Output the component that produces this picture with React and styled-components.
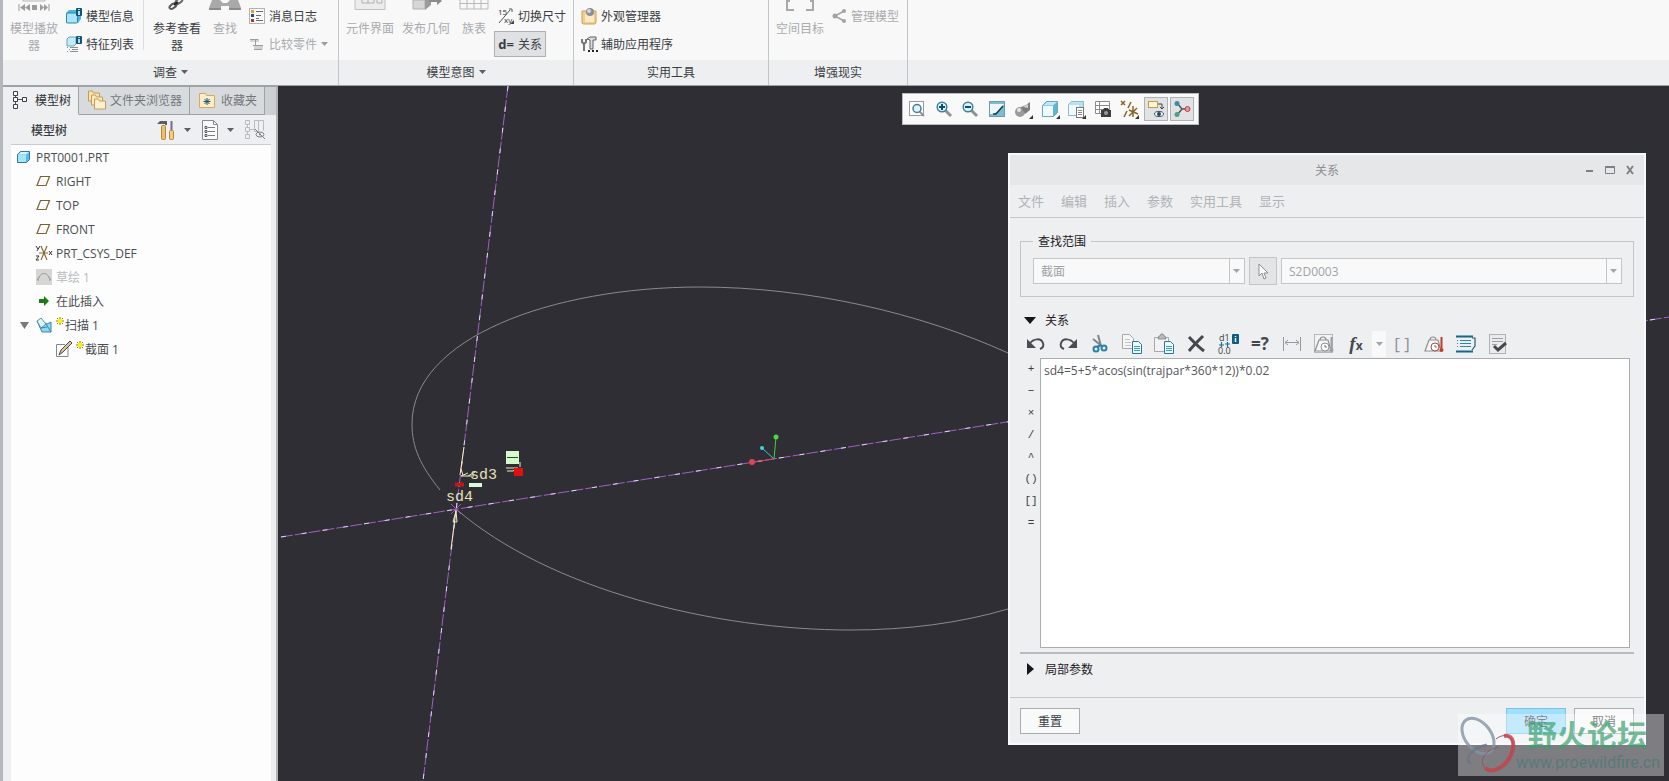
import React from "react";
import styled, { createGlobalStyle, css } from "styled-components";

const GlobalStyle = createGlobalStyle`
  * {
    box-sizing: border-box;
  }

  body {
    margin: 0;
    overflow: hidden;
  }

  body, button, input, select, textarea {
    font-family: "Open Sans", "Noto Sans CJK SC", sans-serif;
    font-size: 12px;
    color: #3a3d42;
  }

  button {
    margin: 0;
    padding: 0;
    border: none;
    background: none;
  }
`;

/* ---------- icons ---------- */

const Svg = styled.svg`
  display: block;
  flex: none;
  overflow: visible;
`;

function Icon({ w = 16, h = 16, children }) {
  return (
    <Svg width={w} height={h} viewBox={`0 0 ${w} ${h}`} fill="none" aria-hidden="true">
      {children}
    </Svg>
  );
}

const Caret = ({ color = "#5c6066" }) => (
  <Icon w={7} h={4}>
    <path d="M0 0h7L3.5 4z" fill={color} />
  </Icon>
);

const InfoBadge = ({ x, y }) => (
  <g>
    <rect x={x} y={y} width="6" height="8" rx="1" fill="#0e5675" />
    <path d={`M${x + 3} ${y + 1}v1M${x + 3} ${y + 3}v4`} stroke="#fff" strokeWidth="1.5" />
  </g>
);

const PlayerIcon = () => (
  <Icon w={32} h={20}>
    <path d="M5 0v1h22V0" stroke="#b5b5b5" />
    <path d="M1 4v7" stroke="#9b9b9b" />
    <path d="M7 4v7L2 7.5zM12 4v7L7 7.5zM14 5h5v5h-5zM22 4v7l4-3.500zM26 4v7l4-3.500z" fill="#9b9b9b" />
    <path d="M31 4v7" stroke="#9b9b9b" />
  </Icon>
);

const CubeInfoIcon = () => (
  <Icon>
    <path d="M0 5l3-3h12v9l-3 4H1l-1-1z" fill="#4db4dc" />
    <rect x="0.5" y="5" width="11" height="10" rx="1" fill="#a9e4f8" stroke="#2e86ab" />
    <InfoBadge x={10} y={0} />
  </Icon>
);

const ListInfoIcon = () => (
  <Icon>
    <path d="M1 3l2-2h7v7l-2 2H1z" fill="#c3ebf8" stroke="#6fa5b8" />
    <InfoBadge x={10} y={0} />
    <path d="M1 11.5h1M4 11.5h8M3 13.5h1M6 13.5h6M1 15.5h1M4 15.5h8" stroke="#8c9094" />
  </Icon>
);

const LinkIcon = () => (
  <Icon w={32} h={20}>
    <ellipse cx="18" cy="1" rx="4" ry="2" transform="rotate(-35 18 1)" stroke="#6a6a6a" strokeWidth="2" />
    <ellipse cx="12" cy="6" rx="4" ry="2" transform="rotate(-35 12 6)" stroke="#5a5a5a" strokeWidth="2" />
    <path d="M13 5l4-3" stroke="#222" strokeWidth="2" />
  </Icon>
);

const BinocularsIcon = () => (
  <Icon w={32} h={20}>
    <path d="M3 0h8l3 3h4l3-3h8l3 8v2H20V6h-8v4H0V8z" fill="#a9a9a9" />
    <path d="M0 8h12v2H0zM20 8h12v2H20z" fill="#8b8b8b" />
  </Icon>
);

const LogIcon = () => (
  <Icon>
    <rect x="0.5" y="0.5" width="15" height="15" fill="#fbfbfb" stroke="#b3b3b3" />
    <rect x="2" y="2" width="3" height="3" fill="#e59a3c" />
    <rect x="2" y="6" width="3" height="3" fill="#2b4a78" />
    <rect x="2" y="11" width="3" height="3" fill="#a04030" />
    <path d="M7 3.5h7M7 7.5h5M7 12.5h7M7 10.5h3" stroke="#6a6a6a" />
  </Icon>
);

const CompareIcon = () => (
  <Icon>
    <path d="M1 3h9v3H7v3h7v4H5v-3h1V6H1z" fill="#d3d3d3" />
    <path d="M1 3.5h8M6.5 4v6M4 9.5h10M5 13.5h8" stroke="#9c9c9c" />
  </Icon>
);

const InterfaceIcon = () => (
  <Icon w={32} h={20}>
    <path d="M1 0v9.5h30V0" fill="#ececec" stroke="#c0c0c0" />
    <path d="M8 0v3h12V0M14 0v3M23 0v3h5V0" stroke="#b0b0b0" />
  </Icon>
);

const PublishIcon = () => (
  <Icon w={32} h={20}>
    <path d="M3 0h12v9H3z" fill="#d6d6d6" stroke="#b0b0b0" />
    <path d="M15 0l6-1v6l-6 5z" fill="#9b9b9b" />
    <path d="M19 0h8v-3l5 4-5 4V2h-8z" fill="#8d8d8d" />
  </Icon>
);

const TableIcon = () => (
  <Icon w={32} h={20}>
    <path d="M2 0v9h28V0M9 0v9M16 0v9M23 0v9M2 3.5h28" stroke="#b9b9b9" />
  </Icon>
);

const SwitchDimIcon = () => (
  <Icon>
    <text x="0" y="7" fontSize="8" fill="#333">15</text>
    <text x="6" y="15" fontSize="8" fill="#333">xy</text>
    <path d="M1 15L12 2M11 1h3v3" stroke="#555" />
    <path d="M16 12v4h-4z" fill="#444" />
  </Icon>
);

const AppearanceIcon = () => (
  <Icon>
    <path d="M1 3h14v11l-1 2H2l-1-1z" fill="#f0cf8b" stroke="#cf9f55" />
    <path d="M4 6h9v8H4z" fill="#faeacb" />
    <circle cx="9" cy="4" r="4" fill="#8b8f94" />
    <circle cx="8" cy="3" r="2" fill="#d5d9dc" />
  </Icon>
);

const ToolsIcon = () => (
  <Icon>
    <path d="M1 3v3l2 2v7M5 3v3L3 8" stroke="#777" strokeWidth="2" />
    <path d="M6 3l3-2h6v3h-3v9H9V4z" fill="#dedede" stroke="#5f5f5f" />
    <path d="M7 15h2M11 15h2M15 15h2" stroke="#222" strokeWidth="2" />
  </Icon>
);

const TargetIcon = () => (
  <Icon w={32} h={20}>
    <path d="M3 1v9h7M29 1v9h-7M2 1h4M30 1h-4" stroke="#a8a8a8" strokeWidth="2" />
  </Icon>
);

const ShareIcon = () => (
  <Icon w={15}>
    <path d="M12 3L3 8l9 5" stroke="#a3a3a3" strokeWidth="1.5" />
    <circle cx="12" cy="3" r="2" fill="#a3a3a3" />
    <circle cx="3" cy="8" r="2.5" fill="#a3a3a3" />
    <circle cx="12" cy="13" r="2" fill="#a3a3a3" />
  </Icon>
);

const TreeTabIcon = () => (
  <Icon w={14} h={20}>
    <path d="M2.5 5v2M2.5 12v3M5 9.5h4" stroke="#555" />
    <path d="M0.5 1.5h4v4h-4zM0.5 7.5h4v4h-4zM0.5 14.5h4v4h-4zM9.5 7.5h4v4h-4z" fill="#fff" stroke="#3c3f44" />
  </Icon>
);

const FoldersIcon = () => (
  <Icon w={18} h={20}>
    <path d="M0.5 1h4l1 2h6v8h-11z" fill="#f8e2b0" stroke="#c49c55" />
    <path d="M3.5 5h4l1 2h6v8h-11z" fill="#fbe9c0" stroke="#c49c55" />
    <path d="M6.5 9h4l1 2h6v8h-11z" fill="#fdf0d0" stroke="#c49c55" />
  </Icon>
);

const FavIcon = () => (
  <Icon>
    <path d="M0.5 1.5h6l1 2h8v12h-15z" fill="#fdedc6" stroke="#d5aa5c" />
    <path d="M8 6v7M4.5 9.5h7M5.5 7l5 5M10.5 7l-5 5" stroke="#0f5876" />
  </Icon>
);

const HammerIcon = () => (
  <Icon w={18} h={20}>
    <path d="M0 4l3-3h7v4H8V4H4z" fill="#5b5d61" />
    <rect x="4.5" y="5.5" width="4" height="14" rx="1" fill="#eebf6b" stroke="#b9853b" />
    <path d="M14.5 1v9" stroke="#7d6a8a" strokeWidth="2" />
    <rect x="12.5" y="10.5" width="4" height="9" rx="1" fill="#f3cf86" stroke="#b9853b" />
  </Icon>
);

const DocListIcon = () => (
  <Icon w={16} h={20}>
    <path d="M0.5 0.5h11l4 4v15h-15z" fill="#fbfbfb" stroke="#84898d" />
    <path d="M11.5 0.5v4h4" stroke="#84898d" />
    <path d="M6 7.5h7M6 11.5h7M6 15.5h7" stroke="#7c8084" />
    <path d="M3 6.5h2v2H3zM3 10.5h2v2H3zM3 14.5h2v2H3z" stroke="#54585c" />
  </Icon>
);

const TreeFilterIcon = () => (
  <Icon w={20} h={20}>
    <path
      d="M0.5 0.5h4v4h-4zM0.5 7.5h4v4h-4zM0.5 14.5h4v4h-4zM2.5 5v2M2.5 12v2M5 9.5h4M9.5 0.5h4v11h-4zM13.5 0.5h5v10"
      stroke="#b9bcbf"
    />
    <ellipse cx="15" cy="14.5" rx="4" ry="2.5" stroke="#7d8286" />
    <circle cx="15" cy="14.5" r="1" fill="#7d8286" />
    <path d="M10 9l10 10" stroke="#7d8286" />
  </Icon>
);

const PartIcon = () => (
  <Icon w={13} h={12}>
    <path d="M0.5 3.5l3-3h9v8l-3 3h-9z" fill="#56bde6" stroke="#33798f" />
    <path d="M1 4h8v7H1z" fill="#a5e5fb" />
    <path d="M1 3.5L4 1h8L9 3.5z" fill="#d8f5fd" />
  </Icon>
);

const PlaneIcon = () => (
  <Icon w={15} h={10}>
    <path d="M4.5 0.5h9l-3.5 9H1z" stroke="#7d6030" strokeWidth="1.2" />
  </Icon>
);

const CsysIcon = () => (
  <Icon>
    <path d="M5 1l6 14M11 1L5 15M3 8h9" stroke="#8a6c34" strokeWidth="1.2" />
    <path d="M0 1l2 3M4 1L1 6M0 11h3l-3 4h3M13 6l3 4M16 6l-3 4" stroke="#333" />
  </Icon>
);

const SketchIcon = () => (
  <Icon>
    <rect width="16" height="16" fill="#d6d6d4" />
    <path d="M2 12c1-10 11-10 12 0M4 7l-3 4M12 7l3 4" stroke="#9c9c9a" />
  </Icon>
);

const ArrowIcon = () => (
  <Icon w={10} h={10}>
    <path d="M0 3h5V0l5 5-5 5V7H0z" fill="#1c7c12" />
  </Icon>
);

const SweepIcon = () => (
  <Icon>
    <path d="M5 4l6 3 4-2v10H6L1 4z" fill="#8fd8f2" stroke="#3a87a6" />
    <path d="M1 4l4-3 5 6-5 4z" fill="#dff4fb" stroke="#5b93aa" />
    <path d="M10 7l5 8M5 11l6-1" stroke="#3a87a6" />
  </Icon>
);

const SectionIcon = () => (
  <Icon>
    <path d="M12 5v10.5H0.5V3.5H9" stroke="#85898d" />
    <path d="M3 14l2-5 9-9 2 2-9 9z" fill="#d9c3a0" stroke="#4b4b4b" />
  </Icon>
);

const SparkIcon = () => (
  <Icon w={8} h={8}>
    <path d="M4 0v8M0 4h8M1 1l6 6M7 1L1 7" stroke="#8c8200" />
    <rect x="2" y="2" width="4" height="4" fill="#fff200" />
  </Icon>
);

const Magnifier = ({ sign }) => (
  <Icon>
    <path d="M9 9l6 6" stroke="#8e9296" strokeWidth="3" />
    <circle cx="6" cy="6" r="4.8" fill="#e2f3f9" stroke="#3d809b" strokeWidth="1.5" />
    <path d={sign} stroke="#0c5070" strokeWidth="2" />
  </Icon>
);

const ZoomFitIcon = () => (
  <Icon>
    <rect x="0.5" y="0.5" width="14" height="14" fill="#fff" stroke="#999" />
    <path d="M10 10l5 5" stroke="#8e9296" strokeWidth="2" />
    <circle cx="8" cy="7.5" r="4" fill="#e2f3f9" stroke="#3d809b" strokeWidth="1.5" />
  </Icon>
);

const ZoomInIcon = () => <Magnifier sign="M3 6h6M6 3v6" />;

const ZoomOutIcon = () => <Magnifier sign="M3 6h6" />;

const RepaintIcon = () => (
  <Icon>
    <rect x="0.5" y="0.5" width="15" height="15" fill="#7fbdd2" stroke="#6a9cad" />
    <path d="M1 3h14C13 7 9 11 4 13H1z" fill="#eef8fb" />
    <path d="M4 13h3l7-8" stroke="#143c50" strokeWidth="1.5" />
  </Icon>
);

const Corner = () => <path d="M18 14v4h-4z" fill="#333" />;

const RenderStyleIcon = () => (
  <Icon>
    <circle cx="5" cy="11" r="5" fill="#9a9a9a" />
    <circle cx="4" cy="9" r="2" fill="#e4e4e4" />
    <path d="M6 6l5-2 4-3v8l-5 4z" fill="#7d7d7d" />
    <path d="M8 6l5-3v4z" fill="#cfcfcf" />
    <Corner />
  </Icon>
);

const BoxIcon = () => (
  <Icon>
    <path d="M0.5 4.5l4-4h11v11l-4 4h-11z" fill="#62b4cf" stroke="#64a9c0" />
    <path d="M1 5h10v10H1z" fill="#eefaff" />
    <path d="M1 4.5L5 1h10l-4 3.5z" fill="#bfe8f6" />
    <Corner />
  </Icon>
);

const NamedViewIcon = () => (
  <Icon>
    <path d="M0.5 3.5l3-3h12v10l-3 4h-12z" fill="#b7e2f1" stroke="#8bbccb" />
    <path d="M1 4h10v10H1z" fill="#f2fbff" />
    <rect x="8.5" y="6.5" width="7" height="10" fill="#fff" stroke="#777" />
    <path d="M10 9.5h4M10 11.5h4M10 13.5h4" stroke="#888" />
    <Corner />
  </Icon>
);

const ViewManagerIcon = () => (
  <Icon>
    <path d="M0.5 0.5h14v12h-14zM0.5 4.5h14M4.5 0.5v12M0.5 8.5h14" fill="#fff" stroke="#8b8b8b" />
    <path d="M6 9h2l1-2h4l1 2h2v7H6z" fill="#3d3d3d" />
    <circle cx="11" cy="12" r="2" fill="#9a9a9a" />
  </Icon>
);

const DatumIcon = () => (
  <Icon>
    <path d="M0 0l4 4M4 0L0 4M3 16l3-6M7 7l3-6M12 5v11M8 9l9 4M16 7l-8 8" stroke="#8a6526" strokeWidth="1.5" />
    <Corner />
  </Icon>
);

const AnnotationIcon = () => (
  <Icon>
    <rect x="0.5" y="0.5" width="9" height="6" fill="#fff6d8" stroke="#c59b46" />
    <path d="M10 3h4v5M12 6l2 2 2-2" stroke="#444" />
    <ellipse cx="11" cy="13" rx="4.5" ry="2.5" fill="#fff" stroke="#35566a" />
    <circle cx="11" cy="13" r="2" fill="#25485c" />
  </Icon>
);

const SpinIcon = () => (
  <Icon>
    <path d="M3 2l5 6-5 6M8 8h6" stroke="#555" strokeWidth="1.5" />
    <circle cx="3" cy="2.5" r="2.5" fill="#3e88a8" />
    <circle cx="3" cy="13.5" r="2.5" fill="#4fa08a" />
    <circle cx="13.5" cy="8" r="2.5" fill="#e29a9a" stroke="#b54444" />
  </Icon>
);

const UndoIcon = ({ flip }) => (
  <Icon w={20} h={14}>
    <g transform={flip ? "matrix(-1 0 0 1 20 0)" : undefined}>
      <path d="M3 7C8 1 15 1 17 6c1 3 0 5-3 6" stroke="#4a4d50" strokeWidth="2" />
      <path d="M1 2v9h9z" fill="#4a4d50" />
    </g>
  </Icon>
);

const ScissorsIcon = () => (
  <Icon w={16} h={18}>
    <path d="M6 0l3 11M1 4l10 8" stroke="#808589" strokeWidth="2" />
    <circle cx="4" cy="14" r="2.5" stroke="#2a80a6" strokeWidth="2" />
    <circle cx="12" cy="13" r="2.5" stroke="#2a80a6" strokeWidth="2" />
    <path d="M5 12l4-2" stroke="#2a80a6" strokeWidth="2" />
  </Icon>
);

const BluePage = () => (
  <g>
    <path d="M10.5 7.5h6l3 3v9h-9z" fill="#eef9fd" stroke="#28779a" />
    <path d="M12 12.5h6M12 14.5h6M12 16.5h6" stroke="#3d9cc4" />
  </g>
);

const CopyIcon = () => (
  <Icon w={20} h={20}>
    <path d="M0.5 0.5h7l4 4v10h-11z" fill="#f6f6f6" stroke="#a6a9ab" />
    <path d="M3 5.5h5M3 8.5h6M3 11.5h6" stroke="#c3c5c7" />
    <BluePage />
  </Icon>
);

const PasteIcon = () => (
  <Icon w={20} h={20}>
    <path d="M0.5 3.5h14v14h-14z" fill="#f3f3f3" stroke="#a6a9ab" />
    <path d="M4 5l1-3h1l1-2h2l1 2h1l1 3z" fill="#b9bbbd" stroke="#8d9093" />
    <BluePage />
  </Icon>
);

const DeleteIcon = () => (
  <Icon w={18} h={18}>
    <path d="M2 2c4 4 8 9 15 14M16 1C11 6 6 11 2 16" stroke="#45484b" strokeWidth="3" />
  </Icon>
);

const DimInfoIcon = () => (
  <Icon w={20} h={20}>
    <text x="1" y="7" fontSize="9" fill="#3a3d40">d1</text>
    <path d="M3.5 8v5M1 11h5M9.5 8v5M7 10h5" stroke="#1d6d90" strokeWidth="1.2" />
    <text x="0" y="20" fontSize="9" fill="#3a3d40">0.0</text>
    <rect x="14" y="0" width="7" height="10" rx="1" fill="#0f5d80" />
    <path d="M17.5 2v1M17.5 4v4" stroke="#fff" strokeWidth="1.5" />
  </Icon>
);

const DistanceIcon = () => (
  <Icon w={20} h={16}>
    <path d="M1.5 1v14M18.5 1v14M3 6.5h14M6 4L3 6.5 6 9M14 4l3 2.5L14 9" stroke="#96999c" />
  </Icon>
);

const ScaleShape = ({ red }) => (
  <g>
    <path d="M5 6h9l3 11H1z" fill="#f6f6f6" stroke="#8b8e91" strokeWidth="1.2" />
    <path d="M6 6c0-4 6-4 6 0" stroke="#8b8e91" strokeWidth="1.2" />
    <circle cx="11" cy="13" r="4" fill="#fff" stroke={red ? "#a04b3c" : "#8b8e91"} />
    <path d="M11 11v2h2" stroke="#777" />
    <path d="M17.5 3v11" stroke={red ? "#c5382e" : "#9a9da0"} strokeWidth="2" />
    <circle cx="17.5" cy="16" r="2" fill={red ? "#c5382e" : "#9a9da0"} />
  </g>
);

const UnitsIcon = () => (
  <Icon w={20} h={20}>
    <rect x="0.5" y="0.5" width="18" height="18" fill="#f1f2f3" stroke="#b5b8ba" />
    <ScaleShape />
  </Icon>
);

const UnitsRedIcon = () => (
  <Icon w={20} h={20}>
    <ScaleShape red />
  </Icon>
);

const SortIcon = () => (
  <Icon w={20} h={18}>
    <path d="M0 1.5h17M0 16.5h17" stroke="#17668a" strokeWidth="2" />
    <path d="M1 5.5h1M4 5.5h11M1 8.5h1M4 8.5h11M1 11.5h1M4 11.5h11" stroke="#2e87ad" />
    <path d="M16 3h3v8l-3 4" stroke="#2b5a70" strokeWidth="1.2" />
  </Icon>
);

const VerifyIcon = () => (
  <Icon w={18} h={20}>
    <rect x="0.5" y="0.5" width="16" height="19" fill="#e9ebec" stroke="#b0b3b5" />
    <path d="M3 4.5h11M3 7.5h11M3 10.5h5" stroke="#9da0a3" />
    <path d="M5 12l4 4 8-7" stroke="#45484b" strokeWidth="3" />
  </Icon>
);

const CursorIcon = () => (
  <Icon w={10} h={17}>
    <path d="M1 1v12l3-3 2 6 2-1-2-5h4z" fill="#fff" stroke="#8a8d90" />
  </Icon>
);

const MinIcon = () => (
  <Icon w={8} h={10}>
    <path d="M0 6h7" stroke="#7e8184" strokeWidth="2" />
  </Icon>
);

const MaxIcon = () => (
  <Icon w={10} h={10}>
    <path d="M0.5 1v7.5h9V1" stroke="#7e8184" />
    <path d="M0 2h10" stroke="#7e8184" strokeWidth="2" />
  </Icon>
);

const CloseIcon = () => (
  <Icon w={9} h={10}>
    <path d="M1 1l6 8M7 1L1 9" stroke="#7e8184" strokeWidth="2" />
  </Icon>
);

/* ---------- ribbon ---------- */

const Page = styled.div`
  display: flex;
  flex-direction: column;
  height: 100vh;
  border-left: 3px solid #b4b8bc;
  background: #2f2e34;
`;

const RibbonBar = styled.header`
  display: flex;
  flex: none;
  background: linear-gradient(#f8f8f9 60px, #edeff1 60px);
  border-bottom: 1px solid #9da2a4;
`;

const Group = styled.section`
  display: flex;
  flex-direction: column;
  min-width: ${(p) => p.$width}px;
  border-right: 1px solid #c3c6c8;
`;

const GroupItems = styled.div`
  display: flex;
  height: 60px;
  padding-left: 3px;
`;

const GroupLabel = styled.div`
  display: flex;
  align-items: center;
  justify-content: center;
  gap: 4px;
  height: 25px;
  padding-bottom: 2px;
`;

const TallButton = styled.button`
  display: flex;
  flex-direction: column;
  align-items: center;
  width: ${(p) => (p.$narrow ? 40 : 56)}px;
  color: ${(p) => (p.disabled ? "#a9abae" : "#3a3d42")};

  span {
    max-width: 48px;
    line-height: 17px;
  }
`;

const Column = styled.div`
  display: flex;
  flex-direction: column;
  align-items: flex-start;
  gap: 2px;
  padding-top: 3px;
`;

const SmallButton = styled.button`
  display: flex;
  align-items: center;
  gap: 4px;
  height: 26px;
  padding: 0 3px;
  border: 1px solid transparent;
  white-space: nowrap;
  color: ${(p) => (p.disabled ? "#a9abae" : "#3a3d42")};

  ${(p) =>
    p.$pressed &&
    css`
      background: #dfe1e3;
      border-color: #aeb2b5;
    `}
`;

const DEquals = styled.b`
  width: 16px;
  font-size: 13px;
  line-height: 16px;
`;

const Divider = styled.div`
  width: 1px;
  height: 50px;
  margin: 0 5px;
  background: #dcdee0;
`;

function Ribbon() {
  return (
    <RibbonBar>
      <Group $width={336}>
        <GroupItems>
          <TallButton disabled><PlayerIcon /><span>模型播放器</span></TallButton>
          <Column>
            <SmallButton><CubeInfoIcon />模型信息</SmallButton>
            <SmallButton><ListInfoIcon />特征列表</SmallButton>
          </Column>
          <Divider />
          <TallButton><LinkIcon /><span>参考查看器</span></TallButton>
          <TallButton disabled $narrow><BinocularsIcon /><span>查找</span></TallButton>
          <Column>
            <SmallButton><LogIcon />消息日志</SmallButton>
            <SmallButton disabled><CompareIcon />比较零件 <Caret color="#9a9da0" /></SmallButton>
          </Column>
        </GroupItems>
        <GroupLabel>调查 <Caret /></GroupLabel>
      </Group>
      <Group $width={235}>
        <GroupItems>
          <TallButton disabled><InterfaceIcon /><span>元件界面</span></TallButton>
          <TallButton disabled><PublishIcon /><span>发布几何</span></TallButton>
          <TallButton disabled $narrow><TableIcon /><span>族表</span></TallButton>
          <Column>
            <SmallButton><SwitchDimIcon />切换尺寸</SmallButton>
            <SmallButton $pressed><DEquals>d=</DEquals>关系</SmallButton>
          </Column>
        </GroupItems>
        <GroupLabel>模型意图 <Caret /></GroupLabel>
      </Group>
      <Group $width={195}>
        <GroupItems>
          <Column>
            <SmallButton><AppearanceIcon />外观管理器</SmallButton>
            <SmallButton><ToolsIcon />辅助应用程序</SmallButton>
          </Column>
        </GroupItems>
        <GroupLabel>实用工具</GroupLabel>
      </Group>
      <Group $width={139}>
        <GroupItems>
          <TallButton disabled><TargetIcon /><span>空间目标</span></TallButton>
          <Column>
            <SmallButton disabled><ShareIcon />管理模型</SmallButton>
          </Column>
        </GroupItems>
        <GroupLabel>增强现实</GroupLabel>
      </Group>
    </RibbonBar>
  );
}

/* ---------- model tree ---------- */

const Workspace = styled.main`
  display: flex;
  flex: 1;
  min-height: 0;
`;

const SidePanel = styled.aside`
  display: flex;
  flex-direction: column;
  flex: none;
  width: 275px;
  background: #edeff1;
  border-top: 1px solid #9da2a4;
  border-right: 2px solid #aeb3b6;
`;

const Tabs = styled.div`
  display: flex;
  height: 28px;
  background: #cdd0d2;
`;

const Tab = styled.button`
  display: flex;
  align-items: center;
  gap: ${(p) => p.$gap}px;
  padding: 0 7px 1px 9px;
  color: #73777b;
  background: #d8dbdd;
  border-right: 1px solid #9da2a5;
  border-bottom: 1px solid #9da2a5;
  white-space: nowrap;

  ${(p) =>
    p.$active &&
    css`
      padding-left: 10px;
      color: #2f3236;
      background: #edeff1;
      border-bottom-color: #edeff1;
    `}
`;

const TreeHeader = styled.div`
  display: flex;
  align-items: center;
  height: 29px;
  padding: 0 11px 0 28px;

  h2 {
    flex: 1;
    margin: 0;
    font-size: 12px;
    font-weight: 500;
  }
`;

const HeaderButton = styled.button`
  display: flex;
  align-items: center;
  gap: 9px;
  margin-left: 11px;
`;

const TreeList = styled.ul`
  flex: 1;
  margin: 0 5px 0 8px;
  padding: 0;
  list-style: none;
  background: #fdfdfd;
  border-top: 1px solid #c9ccce;
`;

const TreeRow = styled.li`
  display: flex;
  align-items: center;
  height: 24px;
  padding-left: ${(p) => 5 + p.$depth * 20}px;
  font-size: 12px;
  color: ${(p) => (p.$muted ? "#b9bbbd" : "#4a4d51")};
`;

const IconCell = styled.span`
  display: flex;
  justify-content: center;
  width: 15px;
  margin-right: 5px;
`;

const Expander = styled.button`
  width: 10px;
  margin: 0 6px 0 -16px;
`;

const NewMark = styled.span`
  align-self: flex-start;
  padding: 4px 1px 0 0;
`;

const treeItems = [
  { name: "PRT0001.PRT", depth: 0, icon: <PartIcon /> },
  { name: "RIGHT", depth: 1, icon: <PlaneIcon /> },
  { name: "TOP", depth: 1, icon: <PlaneIcon /> },
  { name: "FRONT", depth: 1, icon: <PlaneIcon /> },
  { name: "PRT_CSYS_DEF", depth: 1, icon: <CsysIcon /> },
  { name: "草绘 1", depth: 1, icon: <SketchIcon />, muted: true },
  { name: "在此插入", depth: 1, icon: <ArrowIcon /> },
  { name: "扫描 1", depth: 1, icon: <SweepIcon />, open: true, fresh: true },
  { name: "截面 1", depth: 2, icon: <SectionIcon />, fresh: true },
];

function ModelTree() {
  return (
    <SidePanel>
      <Tabs>
        <Tab $active $gap={8}><TreeTabIcon />模型树</Tab>
        <Tab $gap={4}><FoldersIcon />文件夹浏览器</Tab>
        <Tab $gap={6}><FavIcon />收藏夹</Tab>
      </Tabs>
      <TreeHeader>
        <h2>模型树</h2>
        <HeaderButton aria-label="设置"><HammerIcon /><Caret /></HeaderButton>
        <HeaderButton aria-label="显示"><DocListIcon /><Caret /></HeaderButton>
        <HeaderButton aria-label="过滤" disabled><TreeFilterIcon /></HeaderButton>
      </TreeHeader>
      <TreeList>
        {treeItems.map((item) => {
          return (
            <TreeRow key={item.name} $depth={item.depth} $muted={item.muted}>
              {item.open && (
                <Expander aria-label="折叠">
                  <Icon w={9} h={7}><path d="M0 0h9L4.5 7z" fill="#77797c" /></Icon>
                </Expander>
              )}
              <IconCell>{item.icon}</IconCell>
              {item.fresh && <NewMark><SparkIcon /></NewMark>}
              <span>{item.name}</span>
            </TreeRow>
          );
        })}
      </TreeList>
    </SidePanel>
  );
}

/* ---------- graphics area ---------- */

const Canvas = styled.section`
  position: relative;
  flex: 1;
  min-width: 0;
  background: #2f2e34;
`;

const SceneSvg = styled.svg`
  position: absolute;
  inset: 0;
  width: 100%;
  height: 100%;

  text {
    font-family: "Liberation Mono", monospace;
    font-size: 15px;
    fill: #e6e1b4;
  }
`;

const axes = ["M508 86L423 781", "M281 537L1669 317"];

function Scene() {
  return (
    <SceneSvg viewBox="278 86 1391 695" preserveAspectRatio="xMinYMin slice" fill="none">
      <path d="M440 490C420 465 412 447 412 424C412 338 552 287 700 287C808 287 920 313 1008 353" stroke="#8b8a8f" />
      <path d="M456 509C550 590 715 630 850 630C908 630 960 623 1008 609" stroke="#8b8a8f" />
      {axes.map((d) => (
        <g key={d}>
          <path d={d} stroke="#a45fc4" strokeDasharray="12 2" />
          <path d={d} stroke="#dcd8f4" strokeDasharray="5 16" />
        </g>
      ))}
      <path d="M451 504l10 10M461 504l-10 10" stroke="#9c59b8" />
      <path d="M464 447l-4 28M456 510l-5 39M456 511l-3 11h4zM461 469l2 6M461 476h13M461 476l7-3M468 476l7-4" stroke="#f3eebc" />
      <path d="M455 484.5h9" stroke="#c4151a" strokeWidth="4" />
      <rect x="469" y="483" width="13" height="4" fill="#d9fbd5" />
      <rect x="506" y="451" width="13" height="13" fill="#d3fbcb" />
      <path d="M507 457.5h11" stroke="#2a4a2a" />
      <path d="M506 468h12M507 471h6l4-3M520 462v5" stroke="#f3eebc" />
      <rect x="514" y="468" width="9" height="8" fill="#e0120f" />
      <text x="470" y="479">sd3</text>
      <text x="446" y="501">sd4</text>
      <path d="M774 459l-12-11" stroke="#3cc9cd" />
      <path d="M774 459l2-22" stroke="#3fd23c" />
      <path d="M774 459l-22 3" stroke="#d8465a" />
      <circle cx="762" cy="448" r="2" fill="#3fd6d6" />
      <circle cx="776" cy="437" r="2.5" fill="#48d848" />
      <circle cx="752" cy="462" r="3" fill="#d8465a" />
    </SceneSvg>
  );
}

const ViewBar = styled.div`
  position: absolute;
  top: 7px;
  right: 470px;
  display: flex;
  align-items: center;
  justify-content: space-between;
  width: 297px;
  height: 32px;
  padding: 0 4px 0 2px;
  background: #f9f9f9;
  border: 1px solid #b9bcbe;
`;

const ViewButton = styled.button`
  display: flex;
  align-items: center;
  justify-content: center;
  width: 24px;
  height: 24px;
  border: 1px solid ${(p) => (p.$pressed ? "#aeb2b5" : "transparent")};
  background: ${(p) => (p.$pressed ? "#e0e2e4" : "none")};
`;

const viewTools = [
  ["重新调整", ZoomFitIcon],
  ["放大", ZoomInIcon],
  ["缩小", ZoomOutIcon],
  ["重画", RepaintIcon],
  ["渲染选项", RenderStyleIcon],
  ["显示样式", BoxIcon],
  ["已保存方向", NamedViewIcon],
  ["视图管理器", ViewManagerIcon],
  ["基准显示过滤器", DatumIcon],
  ["注释显示", AnnotationIcon, true],
  ["旋转中心", SpinIcon, true],
];

/* ---------- relations dialog ---------- */

const DialogBox = styled.section`
  position: absolute;
  top: 67px;
  right: 23px;
  width: 638px;
  background: #edeff1;
  border: 2px solid #f8f9fa;
`;

const TitleBar = styled.header`
  display: grid;
  grid-template-columns: 1fr auto 1fr;
  align-items: center;
  height: 30px;
  padding: 0 9px;
  color: #8b8e92;
  background: #e6e7e9;

  h1 {
    grid-column: 2;
    margin: 0;
    font-size: 12px;
    font-weight: 400;
  }
`;

const WindowButtons = styled.div`
  display: flex;
  justify-content: flex-end;
  gap: 11px;
`;

const MenuBar = styled.nav`
  display: flex;
  align-items: center;
  gap: 17px;
  height: 33px;
  padding: 0 8px 2px;
  border-bottom: 1px solid #c6c9cc;

  button {
    font-size: 13px;
    color: #b0b3b6;
  }
`;

const DialogBody = styled.div`
  padding: 14px 10px 13px;
`;

const Scope = styled.fieldset`
  display: flex;
  align-items: center;
  gap: 4px;
  margin: 0 0 13px;
  padding: 7px 11px 11px 12px;
  border: 1px solid #c3c6c9;

  legend {
    padding: 2px 5px 0;
    line-height: 16px;
    color: #1e2024;
  }
`;

const SelectBox = styled.div`
  display: flex;
  align-items: center;
  flex: ${(p) => (p.$grow ? "1" : "0 0 212px")};
  height: 26px;
  background: #f9f9f9;
  border: 1px solid #c3c6c9;

  select {
    flex: 1;
    height: 24px;
    padding: 0 7px;
    appearance: none;
    background: none;
    border: none;
    border-right: 1px solid #c3c6c9;
    color: #a0a3a6;
    opacity: 1;
  }

  svg {
    margin: 0 4px 0 3px;
  }
`;

const PickButton = styled.button`
  display: flex;
  align-items: center;
  justify-content: center;
  width: 28px;
  height: 28px;
  background: #e2e4e6;
  border: 1px solid #c3c6c9;
`;

const SectionToggle = styled.button`
  display: flex;
  align-items: center;
  gap: 9px;
  height: ${(p) => (p.$tall ? 30 : 20)}px;
  padding-left: 4px;
  color: #1e2024;
`;

const Toggler = styled.span`
  display: flex;
  justify-content: center;
  width: 12px;
`;

const ToolRow = styled.div`
  display: flex;
  align-items: center;
  height: 28px;
`;

const Tool = styled.button`
  display: flex;
  align-items: center;
  justify-content: center;
  width: ${(p) => (p.$slim ? 14 : 32)}px;
  height: 26px;
  background: ${(p) => (p.$slim ? "#f9f9f9" : "none")};
  color: #45484b;
`;

const Glyph = styled.span`
  font-size: 17px;
  line-height: 20px;
  font-weight: ${(p) => (p.$light ? 400 : 700)};
  color: ${(p) => (p.$light ? "#8d9093" : "#45484b")};
`;

const Fx = styled.span`
  font: italic bold 19px/20px "Liberation Serif", serif;

  small {
    font: bold 12px "Open Sans", sans-serif;
  }
`;

const EditorRow = styled.div`
  display: flex;
  height: 290px;
  padding-right: 4px;
`;

const Operators = styled.div`
  display: flex;
  flex-direction: column;
  width: 20px;

  button {
    height: 22px;
    padding-left: 2px;
    font: 11px/20px "Liberation Mono", monospace;
    white-space: nowrap;
  }
`;

const Editor = styled.textarea`
  flex: 1;
  margin: 0;
  padding: 3px;
  font-size: 12px;
  line-height: 18px;
  color: #54575b;
  background: #fff;
  border: 1px solid #a9adb0;
  resize: none;
  outline: none;
`;

const Rule = styled.hr`
  height: 2px;
  margin: 4px 0 0;
  border: none;
  background: #b9bcbf;
`;

const Footer = styled.footer`
  display: flex;
  gap: 8px;
  padding: 10px 10px 9px;
  border-top: 1px solid #c6c9cc;
`;

const DialogButton = styled.button`
  width: 60px;
  height: 26px;
  margin-right: ${(p) => (p.$first ? "auto" : "0")};
  background: ${(p) => (p.$primary ? "#9fdffc" : "#f8f9f9")};
  border: 1px solid ${(p) => (p.$primary ? "#7cc4e4" : "#a9adb0")};
`;

const relationTools = [
  ["撤消", <UndoIcon />],
  ["重做", <UndoIcon flip />],
  ["剪切", <ScissorsIcon />],
  ["复制", <CopyIcon />],
  ["粘贴", <PasteIcon />],
  ["删除", <DeleteIcon />],
  ["切换尺寸", <DimInfoIcon />],
  ["求值", <Glyph>=?</Glyph>],
  ["测量", <DistanceIcon />],
  ["单位", <UnitsIcon />],
  ["函数", <Fx>f<small>x</small></Fx>],
  ["更多函数", <Caret color="#a3a6a9" />, true],
  ["括号", <Glyph $light>[ ]</Glyph>],
  ["单位敏感", <UnitsRedIcon />],
  ["排序", <SortIcon />],
  ["校验", <VerifyIcon />],
];

const operators = ["+", "−", "×", "/", "^", "()", "[]", "="];

function RelationsDialog() {
  return (
    <DialogBox role="dialog" aria-labelledby="relations-title">
      <TitleBar>
        <h1 id="relations-title">关系</h1>
        <WindowButtons>
          <button aria-label="最小化"><MinIcon /></button>
          <button aria-label="最大化"><MaxIcon /></button>
          <button aria-label="关闭"><CloseIcon /></button>
        </WindowButtons>
      </TitleBar>
      <MenuBar>
        {["文件", "编辑", "插入", "参数", "实用工具", "显示"].map((name) => (
          <button key={name} disabled>{name}</button>
        ))}
      </MenuBar>
      <DialogBody>
        <Scope>
          <legend>查找范围</legend>
          <SelectBox>
            <select aria-label="对象类型" disabled>
              <option>截面</option>
            </select>
            <Caret color="#a3a6a9" />
          </SelectBox>
          <PickButton aria-label="选择" disabled><CursorIcon /></PickButton>
          <SelectBox $grow>
            <select aria-label="对象名称" disabled>
              <option>S2D0003</option>
            </select>
            <Caret color="#a3a6a9" />
          </SelectBox>
        </Scope>
        <SectionToggle aria-expanded="true">
          <Toggler><Icon w={12} h={7}><path d="M0 0h12L6 7z" fill="#15171a" /></Icon></Toggler>
          <span id="relations-label">关系</span>
        </SectionToggle>
        <ToolRow>
          {relationTools.map(([label, icon, slim]) => (
            <Tool key={label} aria-label={label} $slim={slim}>{icon}</Tool>
          ))}
        </ToolRow>
        <EditorRow>
          <Operators>
            {operators.map((op) => (
              <button key={op}>{op}</button>
            ))}
          </Operators>
          <Editor
            aria-labelledby="relations-label"
            spellCheck={false}
            defaultValue="sd4=5+5*acos(sin(trajpar*360*12))*0.02"
          />
        </EditorRow>
        <Rule />
        <SectionToggle $tall aria-expanded="false">
          <Toggler><Icon w={7} h={12}><path d="M0 0v12L7 6z" fill="#15171a" /></Icon></Toggler>
          局部参数
        </SectionToggle>
      </DialogBody>
      <Footer>
        <DialogButton $first>重置</DialogButton>
        <DialogButton $primary>确定</DialogButton>
        <DialogButton>取消</DialogButton>
      </Footer>
    </DialogBox>
  );
}

/* ---------- forum badge ---------- */

const Badge = styled.div`
  position: absolute;
  right: 5px;
  bottom: 5px;
  display: flex;
  width: 206px;
  height: 62px;
  background: rgba(255, 255, 255, 0.38);
  pointer-events: none;
`;

const BadgeText = styled.div`
  display: flex;
  flex-direction: column;
  white-space: nowrap;

  strong {
    padding-left: 11px;
    font-family: "Noto Sans CJK SC", sans-serif;
    font-size: 30px;
    line-height: 38px;
    color: rgba(58, 160, 110, 0.7);
  }

  span {
    font-family: Roboto, sans-serif;
    font-size: 16px;
    line-height: 22px;
    color: rgba(72, 122, 118, 0.75);
  }
`;

function ForumBadge() {
  return (
    <Badge>
      <Icon w={58} h={62}>
        <ellipse cx="20" cy="22" rx="13" ry="20" transform="rotate(-38 20 22)" stroke="#8593a5" strokeWidth="3" opacity="0.8" />
        <path d="M29 31C12 34 6 46 13 50" stroke="#6f7783" strokeWidth="3" opacity="0.8" />
        <path d="M38 25C48 17 58 24 54 37C50 52 34 61 27 54C20 46 28 36 40 33" stroke="#8b5a64" />
        <path d="M46 22C57 20 57 33 52 43C46 54 34 60 27 54" stroke="#c2454e" strokeWidth="4" opacity="0.85" />
      </Icon>
      <BadgeText>
        <strong>野火论坛</strong>
        <span>www.proewildfire.cn</span>
      </BadgeText>
    </Badge>
  );
}

function App() {
  return (
    <Page>
      <GlobalStyle />
      <Ribbon />
      <Workspace>
        <ModelTree />
        <Canvas>
          <Scene />
          <ViewBar role="toolbar">
            {viewTools.map(([label, ToolIcon, pressed]) => (
              <ViewButton key={label} aria-label={label} $pressed={pressed}>
                <ToolIcon />
              </ViewButton>
            ))}
          </ViewBar>
          <RelationsDialog />
          <ForumBadge />
        </Canvas>
      </Workspace>
    </Page>
  );
}

export default App;
